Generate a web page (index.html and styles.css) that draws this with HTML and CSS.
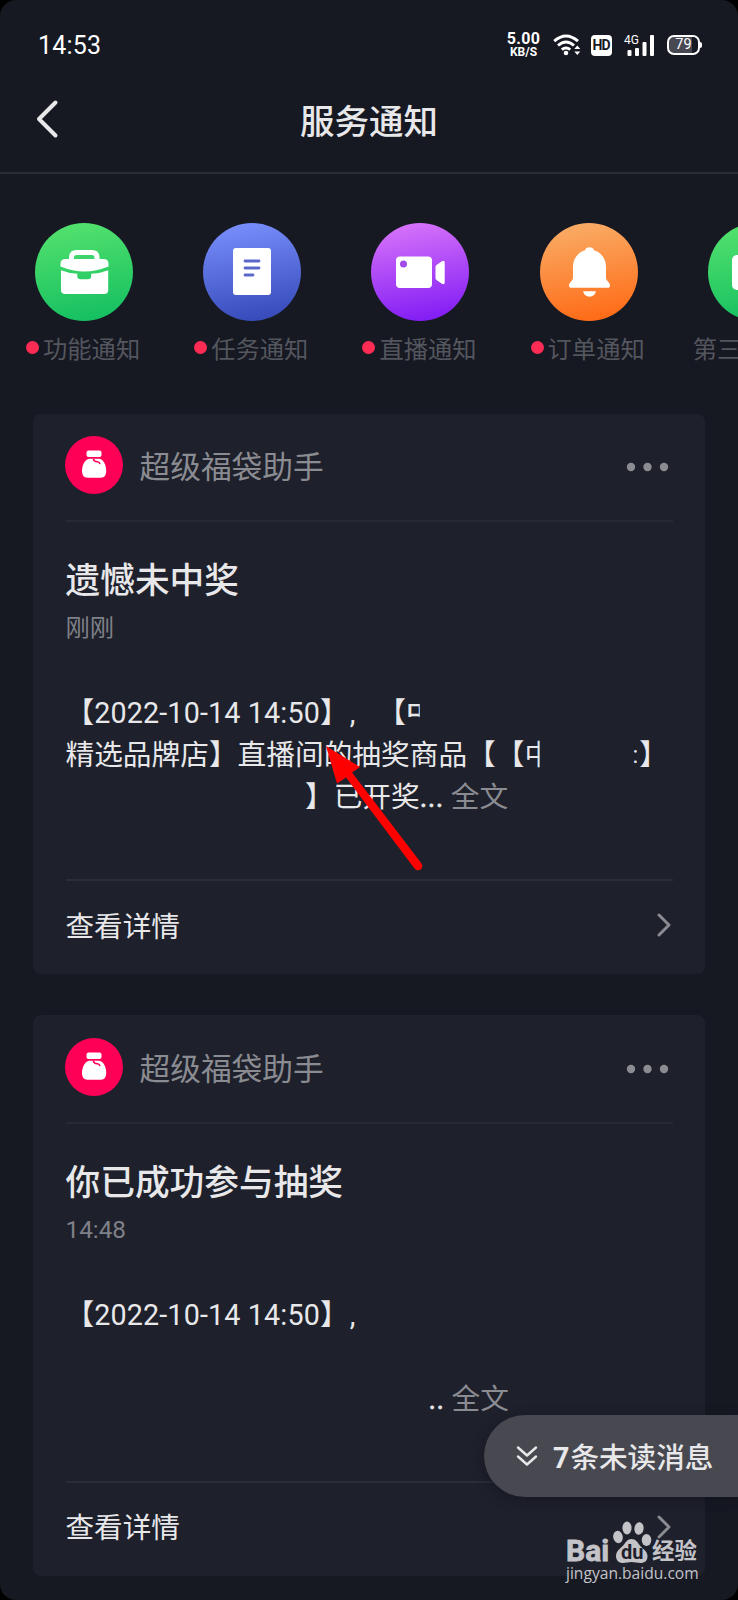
FILE: index.html
```html
<!DOCTYPE html>
<html lang="zh-CN">
<head>
<meta charset="utf-8">
<title>服务通知</title>
<link rel="stylesheet" href="styles.css">
</head>
<body>
<svg class="defs" width="0" height="0">
  <symbol id="bag" viewBox="0 0 58 58">
    <path d="M23.500 14.500h11q2 0 2 2v2.500q0 2-2 2h-11q-2 0-2-2v-2.500q0-2 2-2z" fill="#fff"/>
    <path d="M24.500 22.800h9.500c3.500 0 7.200 5.500 7.200 11.700 0 5-2 7.200-5.200 7.200H22.300c-3.300 0-5.300-2.200-5.300-7.200 0-6.200 4-11.700 7.500-11.700z" fill="#fff"/>
    <path d="M28.500 23.200q.5 2.600 3.800 2.500 2 .1 2.400 1.700" fill="none" stroke="#ff0057" stroke-width="1.600" stroke-linecap="round"/>
  </symbol>
</svg>
<div class="screen">
  <div class="status">
    <span class="clock">14:53</span>
    <div class="indicators">
      <div class="speed"><b>5.00</b><small>KB/S</small></div>
      <svg class="wifi" width="28" height="22" viewBox="0 0 28 22" fill="none" stroke="#fff" stroke-width="2.900">
        <path d="M1.200 7.200Q13 -3 25 7.200M5 11.500q8-7 16 0M8.800 15.700q4.200-3.500 8.400 0"/>
        <circle cx="13" cy="19" r="2.300" fill="#fff" stroke="none"/>
        <path d="M21.300 15l3-3.400 3 3.400zM21.300 17.600l3 3.400 3-3.400z" fill="#fff" stroke="none"/>
      </svg>
      <span class="hd">HD</span>
      <div class="signal">
        <span>4G</span>
        <svg width="30" height="21" viewBox="0 0 30 21" fill="#fff"><rect x="3.500" y="15" width="4" height="6" rx="1"/><rect x="11" y="13" width="4" height="8" rx="1"/><rect x="18.500" y="7" width="4" height="14" rx="1"/><rect x="26" y="0" width="4" height="21" rx="1"/></svg>
      </div>
      <span class="battery">79</span>
    </div>
  </div>
  <header class="bar">
    <svg class="back" width="24" height="40" viewBox="0 0 24 40"><path d="M20.500 3.500 4 20 20.500 36.500" fill="none" stroke="#e8e8ea" stroke-width="4" stroke-linecap="round" stroke-linejoin="round"/></svg>
    <h1>服务通知</h1>
  </header>
  <nav class="cats">
    <div class="cat">
      <div class="disc green"><svg width="98" height="98" viewBox="0 0 98 98" fill="#fff">
        <path d="M36.500 38v-3.500q0-5 5-5h15.500q5 0 5 5V38" fill="none" stroke="#fff" stroke-width="5"/>
        <path d="M30.500 36h38q5 0 5 5v2.500Q61 48.500 49.500 48.500T25.500 43.500V41q0-5 5-5z"/>
        <path d="M26 47.300q8 3.200 16.300 3.500V53q0 3.200 3.200 3.200h7.500q3.200 0 3.200-3.200v-2.200q9-.3 17-3.500V67q0 4-4 4H30q-4 0-4-4z"/>
      </svg></div>
      <div class="label"><i></i>功能通知</div>
    </div>
    <div class="cat">
      <div class="disc blue"><svg width="98" height="98" viewBox="0 0 98 98">
        <rect x="30" y="25" width="38" height="47" rx="3" fill="#fff"/>
        <path d="M42 38h14M42 45h14M42 52h8" stroke="#5a69c9" stroke-width="2.800" stroke-linecap="round"/>
      </svg></div>
      <div class="label"><i></i>任务通知</div>
    </div>
    <div class="cat">
      <div class="disc purple"><svg width="98" height="98" viewBox="0 0 98 98" fill="#fff">
        <rect x="25" y="33.500" width="36" height="31.500" rx="4"/>
        <path d="M64.500 44q0-1.500 1.300-2.300l5.200-3.400q2.700-1.300 2.700 1.200v20q0 2.500-2.700 1.200l-5.200-3.400q-1.300-.8-1.300-2.300z"/>
        <circle cx="32.500" cy="41" r="3.500" fill="#a24be8"/>
      </svg></div>
      <div class="label"><i></i>直播通知</div>
    </div>
    <div class="cat">
      <div class="disc orange"><svg width="98" height="98" viewBox="0 0 98 98" fill="#fff">
        <path d="M49.500 24.300c2.500 0 4 1.300 4.500 3 8 2.500 12 9 12 16.500v11c0 3 4 4.500 4 7.700 0 1.500-.8 2.300-2.500 2.300h-36c-1.700 0-2.500-.8-2.500-2.300 0-3.200 4-4.700 4-7.700v-11c0-7.500 4-14 12-16.500.5-1.700 2-3 4.500-3z"/>
        <path d="M43 68.300h13q-1.500 5.400-6.500 5.400T43 68.300z"/>
      </svg></div>
      <div class="label"><i></i>订单通知</div>
    </div>
    <div class="cat">
      <div class="disc green"><svg width="98" height="98" viewBox="0 0 98 98"><rect x="24" y="32" width="50" height="35" rx="5" fill="#fff"/></svg></div>
      <div class="label wide">第三</div>
    </div>
  </nav>
  <main class="feed">
    <article class="card">
      <div class="sender">
        <svg class="avatar" width="58" height="58"><use href="#bag"/></svg>
        <span class="name">超级福袋助手</span>
        <svg class="more" width="44" height="10" viewBox="0 0 44 10" fill="#8b8c92"><circle cx="5" cy="5" r="4.200"/><circle cx="21.500" cy="5" r="4.200"/><circle cx="38" cy="5" r="4.200"/></svg>
      </div>
      <div class="content">
        <h2>遗憾未中奖</h2>
        <time>刚刚</time>
        <div class="text">
          <p>【<span class="date">2022-10-14 14:50</span>】<span class="comma">,</span>【<span class="cut-a">中</span></p>
          <p>精选品牌店】直播间的抽奖商品【【<span class="cut-b">中</span><span class="cut-c">:</span>】</p>
          <p class="tail">】已开奖<span class="ell">...</span> <em>全文</em></p>
        </div>
      </div>
      <div class="detail"><span>查看详情</span><svg width="15" height="26" viewBox="0 0 15 26"><path d="M2 3 12 13 2 23" fill="none" stroke="#8b8c92" stroke-width="2.900" stroke-linecap="round" stroke-linejoin="round"/></svg></div>
    </article>
    <article class="card">
      <div class="sender">
        <svg class="avatar" width="58" height="58"><use href="#bag"/></svg>
        <span class="name">超级福袋助手</span>
        <svg class="more" width="44" height="10" viewBox="0 0 44 10" fill="#8b8c92"><circle cx="5" cy="5" r="4.200"/><circle cx="21.500" cy="5" r="4.200"/><circle cx="38" cy="5" r="4.200"/></svg>
      </div>
      <div class="content">
        <h2>你已成功参与抽奖</h2>
        <time>14:48</time>
        <div class="text">
          <p>【<span class="date">2022-10-14 14:50</span>】<span class="comma">,</span></p>
          <p></p>
          <p class="tail dots"><span class="ell">..</span> <em>全文</em></p>
        </div>
      </div>
      <div class="detail"><span>查看详情</span><svg width="15" height="26" viewBox="0 0 15 26"><path d="M2 3 12 13 2 23" fill="none" stroke="#8b8c92" stroke-width="2.900" stroke-linecap="round" stroke-linejoin="round"/></svg></div>
    </article>
  </main>
  <svg class="arrow" width="110" height="140" viewBox="0 0 110 140" fill="red"><path d="M6 6 40 27 32 32.500 101.500 123.500A4.300 4.300 0 0 1 94.500 128.500L26 37.500 17 43.500z"/></svg>
  <div class="unread">
    <svg width="22" height="22" viewBox="0 0 22 22" fill="none" stroke="#e8e8ea" stroke-width="2.400" stroke-linecap="round" stroke-linejoin="round"><path d="M2 2.500l9 8 9-8M2 11.500l9 8 9-8"/></svg>
    <span><b>7</b>条未读消息</span>
  </div>
  <div class="mark">
    <div class="brand">
      <span class="bai">Bai</span>
      <div class="paw">
        <svg width="40" height="42" viewBox="0 0 40 42" fill="#c3c3c8">
          <ellipse cx="6" cy="16" rx="4.800" ry="6.200" transform="rotate(-12 6 16)"/><ellipse cx="15" cy="7" rx="4.600" ry="6.500"/><ellipse cx="27" cy="7.500" rx="4.600" ry="6.200" transform="rotate(8 27 7.500)"/><ellipse cx="34.500" cy="19" rx="4.800" ry="6"/>
          <path d="M19.500 18c4 0 6 3 8 6s8 6 8 11-3 7-7 7c-3 0-6-1-9-1s-5 1-8.500 1c-4 0-7-2.500-7-7 0-5 5-8 7.500-11s4-6 8-6z"/>
        </svg>
        <span>du</span>
      </div>
      <span class="exp">经验</span>
    </div>
    <div class="url">jingyan.baidu.com</div>
  </div>
</div>
</body>
</html>
```
FILE: styles.css
```css
* { box-sizing: border-box; }
body { margin: 0; background: #000; }
h1, h2, p { margin: 0; font-weight: 500; }
.defs { position: absolute; }
.screen {
  position: relative;
  width: 738px;
  height: 1600px;
  overflow: hidden;
  border-radius: 16px;
  background: #161822;
  color: #e8e8ea;
  font-family: Roboto, "Noto Sans CJK SC", sans-serif;
  text-spacing-trim: space-all;
  white-space: nowrap;
}
.status {
  display: flex;
  justify-content: space-between;
  align-items: center;
  height: 90px;
  padding: 0 38px 0 38px;
  color: #fff;
}
.clock { font-size: 25px; letter-spacing: 0.2px; }
.indicators { display: flex; align-items: center; }
.speed { display: flex; flex-direction: column; align-items: center; width: 33px; margin-right: 13px; }
.speed b { font-size: 16px; line-height: 14px; letter-spacing: 0.3px; }
.speed small { font-size: 12px; line-height: 12px; font-weight: 700; }
.wifi { margin-right: 10px; }
.hd {
  width: 21px;
  height: 21px;
  margin-right: 12px;
  border-radius: 4px;
  background: #fff;
  color: #161822;
  font-size: 14px;
  font-weight: 700;
  line-height: 21px;
  letter-spacing: -1px;
  text-indent: -1px;
  text-align: center;
}
.signal { position: relative; width: 30px; height: 21px; margin-right: 13px; }
.signal svg { display: block; }
.signal span { position: absolute; left: 0; top: -1px; font-size: 12px; line-height: 13px; }
.battery {
  position: relative;
  width: 33px;
  height: 20px;
  border: 2px solid #fff;
  border-radius: 7px;
  background: linear-gradient(90deg, #474852 79%, #161822 79%);
  font-size: 14.500px;
  line-height: 16px;
  text-align: center;
}
.battery::after { content: ""; position: absolute; right: -4px; top: 5px; width: 2px; height: 6px; border-radius: 0 2px 2px 0; background: #fff; }
.bar {
  display: grid;
  grid-template-columns: 100px 1fr 100px;
  align-items: center;
  height: 84px;
  padding-bottom: 20px;
  border-bottom: 2px solid #2a2c36;
}
.back { margin: -4px 0 0 35px; }
.bar h1 { padding-top: 1px; font-size: 34.500px; line-height: 50px; text-align: center; }
.cats { display: flex; height: 239.500px; padding-top: 49px; }
.cat { flex: 0 0 168.200px; }
.disc { width: 98px; height: 98px; margin-left: 35px; border-radius: 50%; }
.disc svg { display: block; }
.green { background: linear-gradient(170deg, #57e36e, #10bd60); }
.blue { background: linear-gradient(170deg, #7c92ff, #3146b4); }
.purple { background: linear-gradient(170deg, #dc78fa, #7b16f4); }
.orange { background: linear-gradient(170deg, #f9b06b, #ff6610); }
.label { display: flex; align-items: center; gap: 4px; margin: 10px 0 0 26px; color: #54565e; font-size: 24.300px; line-height: 38px; }
.label i { width: 13px; height: 13px; margin-top: -5px; border-radius: 50%; background: #fe2c55; }
.label.wide { margin-left: 20px; }
.feed { display: flex; flex-direction: column; gap: 41.300px; padding: 0 33px; }
.card { height: 560.500px; padding: 0 32.500px; border-radius: 8px; background: #1e202b; }
.sender { display: flex; align-items: center; height: 108.500px; padding-bottom: 4px; border-bottom: 2px solid #272933; }
.avatar { margin-left: -0.500px; border-radius: 50%; background: #ff0057; }
.name { margin-left: 16.500px; color: #8b8c92; font-size: 30.700px; line-height: 44px; padding-top: 6px; }
.more { margin: 4px 2.500px 0 auto; }
.content { height: 359px; padding-top: 34px; border-bottom: 2px solid #2b2d37; }
h2 { font-size: 34.700px; line-height: 50px; }
time { display: block; padding-top: 1px; color: #7f8088; font-size: 24.300px; line-height: 42px; }
.text { padding-top: 43px; font-size: 28.700px; }
.text p { height: 42px; font-weight: 400; line-height: 42px; }
.text em { margin-left: 0; color: #8b8c92; font-style: normal; }
.date { letter-spacing: 0.15px; }
.comma { display: inline-block; width: 28.700px; padding-left: 1px; }
.ell { letter-spacing: 0.4px; -webkit-text-stroke: 0.5px currentColor; }
.tail { padding-left: 239.500px; }
.tail.dots { padding-left: 363px; }
.cut-a { display: inline-block; height: 42px; vertical-align: top; -webkit-text-stroke: 0.5px currentColor; clip-path: inset(12px 15px 17px 0); }
.cut-b { display: inline-block; vertical-align: top; clip-path: inset(0 13.500px 0 0); }
.cut-c { display: inline-block; width: 86px; padding-right: 1px; text-align: right; vertical-align: top; font-size: 24px; clip-path: inset(0 2px 0 0); }
.detail { display: flex; justify-content: space-between; align-items: center; height: 91px; font-size: 28.600px; line-height: 42px; }
.detail svg { margin: -3px 1px 0 0; }
.arrow { position: absolute; left: 320px; top: 740px; }
.unread {
  position: absolute;
  left: 484px;
  top: 1415px;
  display: flex;
  align-items: center;
  gap: 15px;
  width: 254px;
  height: 82px;
  padding-left: 32px;
  border-radius: 41px 0 0 41px;
  background: #484850;
  box-shadow: 0 3px 12px #10111a80;
  font-size: 28.600px;
  font-weight: 500;
}
.unread span { margin-top: -2px; }
.unread b { margin-right: 1px; font-weight: 700; }
.mark { position: absolute; left: 566px; top: 1521px; color: #c3c3c8; }
.brand { display: flex; align-items: flex-end; height: 42px; }
.bai { width: 46px; font-size: 30px; font-weight: 700; line-height: 25px; -webkit-text-stroke: 0.8px currentColor; }
.paw { position: relative; width: 40px; height: 42px; }
.paw span { position: absolute; left: 9px; top: 22px; color: #1e202b; font-size: 20px; font-weight: 700; line-height: 18px; }
.exp { font-size: 22.500px; font-weight: 700; line-height: 24px; }
.url { font-family: "Open Sans", sans-serif; font-size: 15.600px; font-weight: 500; line-height: 20px; }
```
